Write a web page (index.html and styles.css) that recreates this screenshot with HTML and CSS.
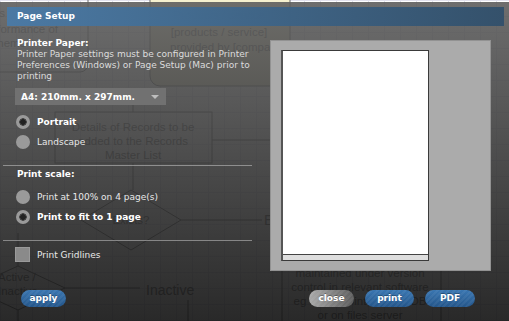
FILE: index.html
```html
<!DOCTYPE html>
<html lang="en">
<head>
    <meta charset="UTF-8">
    <meta name="viewport" content="width=device-width, initial-scale=1.0">
    <title>Page Setup</title>
    <link rel="stylesheet" href="styles.css">
</head>
<body>
    <!-- flowchart sitting behind the modal -->
    <div class="canvas">
        <svg class="diagram" width="509" height="321" viewBox="0 0 509 321">
            <rect class="shape" x="-20" y="-10" width="108" height="82" rx="8"/>
            <rect class="shape note" x="150" y="-10" width="140" height="96" rx="10"/>
            <rect class="shape" x="55" y="112" width="157" height="51"/>
            <line class="shape" x1="133" y1="90" x2="133" y2="112"/>
            <line class="shape" x1="133" y1="163" x2="133" y2="190"/>
            <line class="shape" x1="212" y1="140" x2="272" y2="140"/>
            <polygon class="shape" points="131,190 181,220 131,250 81,220"/>
            <line class="shape" x1="181" y1="220" x2="262" y2="220"/>
            <line class="shape" x1="18" y1="233" x2="18" y2="266"/>
            <polygon class="shape" points="18,266 65,288 18,310 -30,288"/>
            <line class="shape" x1="65" y1="288" x2="140" y2="288"/>
            <line class="shape" x1="18" y1="310" x2="18" y2="321"/>
            <line class="shape" x1="188" y1="300" x2="188" y2="321"/>
            <line class="shape" x1="282" y1="262" x2="282" y2="321"/>
            <line class="shape" x1="441" y1="210" x2="441" y2="321"/>

            <text x="5" y="17" text-anchor="end">Measures</text>
            <text x="58" y="33" text-anchor="end">Performance of</text>
            <text x="26" y="47" text-anchor="end">Scheme</text>
            <text x="219" y="19" text-anchor="middle">Products / service</text>
            <text x="219" y="36" text-anchor="middle">[products / service]</text>
            <text x="170" y="51">provided by [company]</text>
            <text x="133" y="131" text-anchor="middle">Details of Records to be</text>
            <text x="133" y="145" text-anchor="middle">added to the Records</text>
            <text x="133" y="159" text-anchor="middle">Master List</text>
            <text x="131" y="224" text-anchor="middle">Exists?</text>
            <text x="264" y="225" class="big">E</text>
            <text x="-2" y="281">Active /</text>
            <text x="-2" y="295">Inactive</text>
            <text x="146" y="295" class="big">Inactive</text>
            <text x="360" y="277" text-anchor="middle">maintained under version</text>
            <text x="360" y="291" text-anchor="middle">control in relevant software</text>
            <text x="360" y="305" text-anchor="middle">eg SharePoint, Hub or DB</text>
            <text x="360" y="319" text-anchor="middle">or on files server</text>
        </svg>
    </div>

    <div class="dialog">
        <div class="titlebar">Page Setup</div>

        <div class="panes">
            <div class="options">
                <div class="heading">Printer Paper:</div>
                <div class="note">Printer Paper settings must be configured in Printer<br>Preferences (Windows) or Page Setup (Mac) prior to<br>printing</div>
                <div class="select">A4: 210mm. x 297mm.</div>

                <div class="choice first"><span class="radio checked"></span><b>Portrait</b></div>
                <div class="choice"><span class="radio"></span>Landscape</div>

                <div class="rule"></div>
                <div class="heading scale">Print scale:</div>
                <div class="choice first"><span class="radio"></span>Print at 100% on 4 page(s)</div>
                <div class="choice"><span class="radio checked"></span><b>Print to fit to 1 page</b></div>

                <div class="rule"></div>
                <div class="check"><span class="box"></span>Print Gridlines</div>
            </div>

            <div class="preview">
                <div class="sheet"><div class="sheet-foot"></div></div>
            </div>
        </div>

        <div class="actions">
            <button class="btn apply">apply</button>
            <button class="btn grey close">close</button>
            <button class="btn print">print</button>
            <button class="btn pdf">PDF</button>
        </div>
    </div>
</body>
</html>
```

FILE: styles.css
```css
body {
    margin: 0;
    width: 509px;
    height: 321px;
    overflow: hidden;
    position: relative;
    font-family: "DejaVu Sans", Verdana, sans-serif;
    font-size: 9px;
}
.canvas {
    position: absolute;
    inset: 0;
    background-color: #fff;
    background-image:
        linear-gradient(to right, #e2e2ee 1px, transparent 1px),
        linear-gradient(#e2e2ee 1px, transparent 1px);
    background-size: 16px 16px;
}
.diagram {
    display: block;
}
.diagram .shape {
    fill: none;
    stroke: #6a6a6a;
    stroke-width: 1;
}
.diagram .note {
    fill: #f6f1cf;
}
.diagram text {
    font-family: "Liberation Sans", Arial, sans-serif;
    font-size: 11.5px;
    fill: #6a6a6a;
}
.diagram text.big {
    font-size: 14px;
}

.dialog {
    position: absolute;
    left: 0;
    top: 2px;
    width: 509px;
    height: 319px;
    box-sizing: border-box;
    padding: 0 3px;
    display: flex;
    flex-direction: column;
    background: linear-gradient(rgba(94, 94, 94, 0.9), rgba(18, 18, 18, 0.9));
    color: #fff;
}
.titlebar {
    margin: 5px 2px 0 4px;
    height: 19px;
    line-height: 19px;
    padding-left: 10px;
    font-weight: bold;
    background: linear-gradient(to right, rgba(74, 122, 166, 0.96), rgba(50, 80, 107, 0.96));
}

.panes {
    display: flex;
}
.options {
    width: 249px;
    padding-top: 12px;
}
.heading {
    font-weight: bold;
    line-height: 11px;
    padding-left: 14px;
}
.heading.scale {
    margin-top: 3px;
}
.note {
    color: #dcdcdc;
    line-height: 11px;
    padding-left: 14px;
    white-space: nowrap;
}
.select {
    margin: 6px 0 0 12px;
    width: 151px;
    height: 17px;
    box-sizing: border-box;
    padding: 0 7px 0 6px;
    display: flex;
    align-items: center;
    background: #717171;
    font-weight: bold;
}
.select::after {
    content: "";
    margin-left: auto;
    border-left: 4px solid transparent;
    border-right: 4px solid transparent;
    border-top: 4px solid #bdbdbd;
}

.choice {
    display: flex;
    align-items: center;
    gap: 7px;
    height: 20px;
    padding-left: 13px;
    color: #e8e8e8;
}
.choice b {
    color: #fff;
}
.choice.first {
    margin-top: 7px;
}
.radio {
    width: 14px;
    height: 14px;
    border-radius: 50%;
    background: #9a9a9a;
}
.radio.checked {
    background: radial-gradient(circle, #222 0 2.5px, #444 3px 3.5px, #9a9a9a 4px);
}
.rule {
    height: 1px;
    margin-top: 16px;
    background: rgba(200, 200, 200, 0.55);
}
.choice + .choice + .rule {
    margin-top: 13px;
}
.check {
    display: flex;
    align-items: center;
    gap: 7px;
    margin-top: 6px;
    padding-left: 12px;
    color: #e8e8e8;
}
.box {
    width: 15px;
    height: 15px;
    box-sizing: border-box;
    background: #8a8a8a;
    border: 1px solid #9a9a9a;
}

.preview {
    margin: 14px 0 0 18px;
    width: 221px;
    height: 231px;
    box-sizing: border-box;
    padding: 9px 0 0 10px;
    background: #ababab;
    border: 1px solid #929292;
}
.sheet {
    width: 148px;
    height: 211px;
    box-sizing: border-box;
    display: flex;
    flex-direction: column;
    justify-content: flex-end;
    background: #fff;
    border: 1px solid #3a3a3a;
    border-left: 2px solid #555;
}
.sheet-foot {
    height: 5px;
    background: #dedede;
    border-top: 1px solid #444;
}

.actions {
    display: flex;
    gap: 11px;
    margin-top: 19px;
    padding: 0 31px 0 18px;
}
.btn {
    height: 17px;
    padding: 0;
    border: none;
    border-radius: 9px;
    font-family: inherit;
    font-size: 9px;
    font-weight: bold;
    line-height: 17px;
    color: #fff;
    text-shadow: 0 -1px 0 rgba(0, 0, 0, 0.3);
    background:
        repeating-linear-gradient(135deg, rgba(255, 255, 255, 0.05) 0 2px, transparent 2px 4px),
        linear-gradient(#3a76b1, #24568a);
}
.btn.grey {
    background:
        repeating-linear-gradient(135deg, rgba(255, 255, 255, 0.05) 0 2px, transparent 2px 4px),
        linear-gradient(100deg, #acacac, #5a5a5a);
}
.apply { width: 45px; }
.close { width: 45px; margin-left: auto; }
.print { width: 49px; }
.pdf { width: 50px; }
```
